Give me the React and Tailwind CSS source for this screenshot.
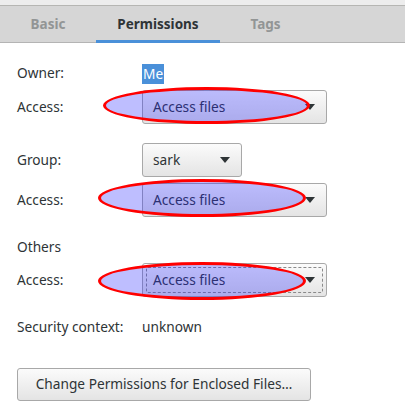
import { useState } from 'react'

const font = { fontFamily: '"Noto Sans", "DejaVu Sans", sans-serif' }

function Combo({ value, width = 'w-[185px]', focused = false }) {
  return (
    <div
      className={`relative flex h-[34px] ${width} items-center justify-between rounded-[3px] border border-[#a8a8a8] bg-gradient-to-b from-[#fbfbfb] to-[#e4e4e4] pl-[10px] pr-[10px] text-[13.7px] text-[#2e3436] shadow-[0_1px_0_rgba(255,255,255,0.8)]`}
    >
      {focused && (
        <div className="pointer-events-none absolute inset-[3px] rounded-[2px] border border-dashed border-[#8a8a8a]" />
      )}
      <span>{value}</span>
      <svg width="10" height="6" viewBox="0 0 10 6" className="mr-[1px]">
        <path d="M0 0 L10 0 L5 6 Z" fill="#2e3436" />
      </svg>
    </div>
  )
}

function Highlight({ className }) {
  return (
    <div
      className={`pointer-events-none absolute rounded-[50%] border-[3px] border-[#ff0000] bg-[rgba(40,40,255,0.3)] ${className}`}
    />
  )
}

function Row({ label, children, className = '' }) {
  return (
    <div className={`relative flex items-center ${className}`}>
      <div className="w-[125px] shrink-0 text-[13.7px] text-[#2e3436]">{label}</div>
      {children}
    </div>
  )
}

export default function App() {
  const [tab, setTab] = useState('Permissions')
  const tabs = [
    { name: 'Basic', w: 'w-[96px]' },
    { name: 'Permissions', w: 'w-[124px]' },
    { name: 'Tags', w: 'w-[91px]' },
  ]

  return (
    <div className="h-[420px] w-[405px] overflow-hidden bg-white" style={font}>
      <div className="h-[6px] border-b border-[#b6b6b3] bg-[#ededed]" />
      <div className="flex h-[37px] border-b border-[#b4b4b4] bg-[#d6d6d6]">
        {tabs.map((t) => (
          <button
            key={t.name}
            onClick={() => setTab(t.name)}
            className={`relative flex h-full items-center justify-center text-[13.5px] font-bold ${t.w} ${
              t.name === tab ? 'text-[#2e3436]' : 'text-[#929595]'
            }`}
          >
            {t.name}
            {t.name === tab && <span className="absolute bottom-[-1px] left-0 right-0 h-[3px] bg-[#4a90d9]" />}
          </button>
        ))}
      </div>

      <div className="flex flex-col pl-[17px] pt-[20px]">
        <Row label="Owner:" className="h-[21px]">
          <span className="bg-[#4a90d9] px-[1px] text-[13.7px] leading-[20px] text-white">Me</span>
        </Row>

        <Row label="Access:" className="mt-[6px] h-[34px]">
          <Combo value="Access files" />
          <Highlight className="left-[86px] top-[-3px] h-[37px] w-[207px]" />
        </Row>

        <Row label="Group:" className="mt-[19px] h-[34px]">
          <Combo value="sark" width="w-[100px]" />
        </Row>

        <Row label="Access:" className="mt-[6px] h-[34px]">
          <Combo value="Access files" />
          <Highlight className="left-[81px] top-[-4px] h-[38px] w-[208px]" />
        </Row>

        <Row label="Others" className="mt-[20px] h-[20px]" />

        <Row label="Access:" className="mt-[6px] h-[34px]">
          <Combo value="Access files" focused />
          <Highlight className="left-[81px] top-[-1px] h-[38px] w-[208px]" />
        </Row>

        <Row label="Security context:" className="mt-[20px] h-[20px]">
          <span className="text-[13.7px] text-[#2e3436]">unknown</span>
        </Row>

        <div className="mt-[31px]">
          <button className="flex h-[33px] w-[294px] items-center justify-center rounded-[3px] border border-[#a8a8a8] bg-gradient-to-b from-[#fbfbfb] to-[#e4e4e4] text-[13.7px] text-[#2e3436]">
            Change Permissions for Enclosed Files…
          </button>
        </div>
      </div>
    </div>
  )
}
